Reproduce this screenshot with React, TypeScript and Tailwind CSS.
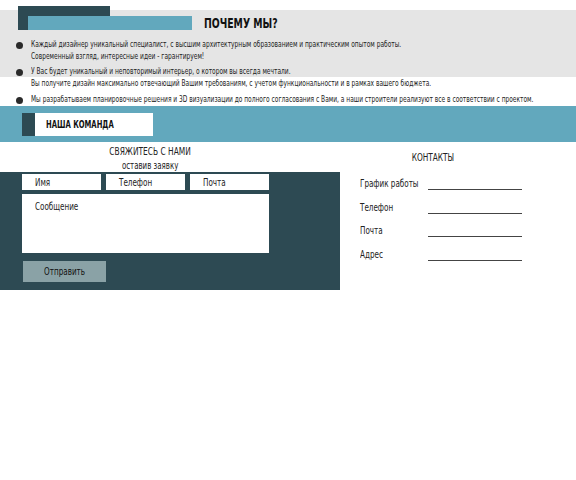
import React from "react";

const font = { fontFamily: '"DejaVu Sans Condensed", "DejaVu Sans", sans-serif' };

// narrow text: the reference uses a condensed face, so squeeze the glyphs
const N = ({ children, className = "" }: { children: React.ReactNode; className?: string }) => (
  <span className={"inline-block whitespace-nowrap " + className}>{children}</span>
);

const Bullet = ({ children }: { children: React.ReactNode }) => (
  <div className="flex">
    <div className="w-[31px] shrink-0 pl-[16px] pt-[3px]">
      <span className="block w-[7px] h-[7px] rounded-full bg-[#2a2a2a]" />
    </div>
    <div className="leading-[12px] flex flex-col">{children}</div>
  </div>
);

const line = "origin-left scale-x-[0.82]";

const App = () => {
  return (
    <div className="w-[576px] h-[480px] bg-white text-[#222] text-[8px] overflow-hidden" style={font}>
      {/* почему мы */}
      <div className="relative pt-[10px]">
        <div className="absolute left-[18px] top-[6px] w-[92px] h-[24px] bg-[#2d4a53]" />
        <div className="bg-[#e5e5e5] h-[67px] pt-[6px]">
          <div className="relative flex items-center">
            <div className="ml-[28px] w-[164px] h-[14px] bg-[#62a8bd]" />
            <h2 className="ml-[12px] text-[14px] font-bold text-[#111] leading-[14px]">
              <N className="origin-left scale-x-[0.74]">ПОЧЕМУ МЫ?</N>
            </h2>
          </div>
        </div>
        <div className="absolute left-0 top-[39px] w-full flex flex-col gap-[3px]">
          <Bullet>
            <N className={line}>Каждый дизайнер уникальный специалист, с высшим архитектурным образованием и практическим опытом работы.</N>
            <N className={line}>Современный взгляд, интересные идеи - гарантируем!</N>
          </Bullet>
          <Bullet>
            <N className={line}>У Вас будет уникальный и неповторимый интерьер, о котором вы всегда мечтали.</N>
            <N className={line}>Вы получите дизайн максимально отвечающий Вашим требованиям, с учетом функциональности и в рамках вашего бюджета.</N>
          </Bullet>
          <div className="mt-[1px]">
            <Bullet>
              <N className={line}>Мы разрабатываем планировочные решения и 3D визуализации до полного согласования с Вами, а наши строители реализуют все в соответствии с проектом.</N>
            </Bullet>
          </div>
        </div>
      </div>
      <div className="h-[29px]" />

      {/* команда */}
      <div className="bg-[#62a8bd] h-[36px] flex items-center pl-[22px]">
        <div className="flex h-[23px] w-[131px]">
          <div className="w-[13px] bg-[#2d4a53]" />
          <div className="flex-1 bg-white flex items-center pl-[11px] text-[10px] font-bold text-[#111]">
            <N className="origin-left scale-x-[0.76]">НАША КОМАНДА</N>
          </div>
        </div>
      </div>

      {/* контакты */}
      <div className="flex">
        <div className="w-[340px]">
          <div className="flex flex-col items-center leading-[14px] pt-[3px] h-[30px] pr-[40px]">
            <N className="text-[10px] scale-x-[0.83]">СВЯЖИТЕСЬ С НАМИ</N>
            <N className="text-[10px] scale-x-[0.78]">оставив заявку</N>
          </div>
          <div className="bg-[#2d4a53] h-[118px] pl-[22px] pt-[2px] text-[10px]">
            <div className="flex gap-[5px]">
              <div className="w-[79px] h-[16px] bg-white pl-[13px] flex items-center"><N className="origin-left scale-x-[0.8]">Имя</N></div>
              <div className="w-[79px] h-[16px] bg-white pl-[13px] flex items-center"><N className="origin-left scale-x-[0.8]">Телефон</N></div>
              <div className="w-[79px] h-[16px] bg-white pl-[13px] flex items-center"><N className="origin-left scale-x-[0.8]">Почта</N></div>
            </div>
            <div className="mt-[4px] w-[247px] h-[59px] bg-white pl-[13px] pt-[5px]"><N className="origin-left scale-x-[0.8]">Сообщение</N></div>
            <button className="mt-[8px] ml-[1px] w-[83px] h-[21px] bg-[#8aa2a6] text-[#111] flex items-center justify-center">
              <N className="scale-x-[0.8]">Отправить</N>
            </button>
          </div>
        </div>
        <div className="flex-1 pt-[8px]">
          <div className="flex justify-center mr-[50px]">
            <N className="text-[10px] scale-x-[0.82]">КОНТАКТЫ</N>
          </div>
          <div className="mt-[14px] pl-[20px] flex flex-col gap-[11.5px] text-[10px]">
            {["График работы", "Телефон", "Почта", "Адрес"].map((l) => (
              <div key={l} className="flex items-end h-[12px]">
                <span className="w-[68px]"><N className="origin-left scale-x-[0.8]">{l}</N></span>
                <span className="w-[94px] border-b border-[#444] mb-[1px]" />
              </div>
            ))}
          </div>
        </div>
      </div>
    </div>
  );
};

export default App;
